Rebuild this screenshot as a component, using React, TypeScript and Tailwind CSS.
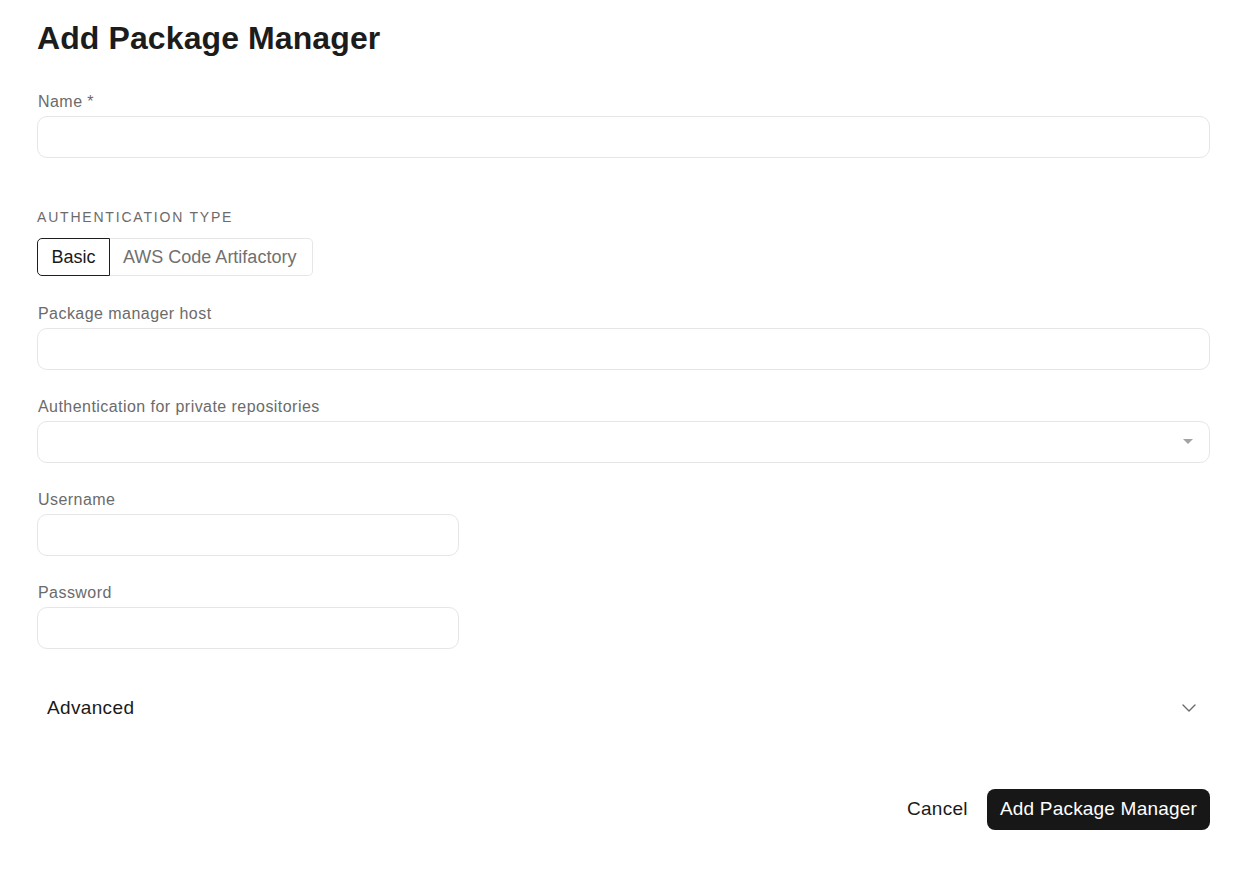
import React from 'react';

const font = { fontFamily: '"Liberation Sans", Arial, sans-serif' };

const Field: React.FC<{ label: string; half?: boolean; select?: boolean }> = ({ label, half, select }) => (
    <div>
        <label className="block h-5 pl-px text-[16px] leading-5 tracking-[0.45px] text-[#6b6b6b]">{label}</label>
        <div
            className={`relative mt-1 h-[42px] rounded-[10px] border border-[#e6e6e6] bg-white ${half ? 'w-[422px]' : 'w-full'}`}
        >
            {select && (
                <svg className="absolute right-[16px] top-[17px]" width="10" height="6" viewBox="0 0 10 6">
                    <path d="M0 0h10L5 5z" fill="#a3a3a3" />
                </svg>
            )}
        </div>
    </div>
);

export default function App() {
    return (
        <div className="min-h-screen bg-white text-[#1a1a1a]" style={font}>
            <div className="px-[37px] pr-[31px] pt-[18px] pb-10">
                <h1 className="text-[32px] leading-10 font-bold tracking-[0.1px] text-[#1c1c1c]">Add Package Manager</h1>

                <div className="mt-[34px]">
                    <Field label="Name *" />
                </div>

                <p className="mt-[49px] h-5 text-[14px] leading-5 tracking-[1.8px] text-[#6b6b6b]">AUTHENTICATION TYPE</p>
                <div className="mt-[11px] flex h-[38px] w-[276px]">
                    <button className="h-full w-[73px] rounded-l-[5px] border border-[#1f1f1f] text-[18px] text-[#1a1a1a]">
                        Basic
                    </button>
                    <button className="h-full flex-1 rounded-r-[5px] border border-l-0 border-[#e6e6e6] pl-[13px] text-left text-[18px] text-[#707070]">
                        AWS Code Artifactory
                    </button>
                </div>

                <div className="mt-[28px] space-y-[27px]">
                    <Field label="Package manager host" />
                    <Field label="Authentication for private repositories" select />
                    <Field label="Username" half />
                    <Field label="Password" half />
                </div>

                <div className="mt-[47px] flex h-6 items-center justify-between pl-[10px] pr-[14px]">
                    <span className="text-[19px] leading-6 tracking-[0.35px] text-[#1a1a1a]">Advanced</span>
                    <svg width="14" height="8" viewBox="0 0 14 8" fill="none">
                        <path d="M1 1l6 6 6-6" stroke="#6b6b6b" strokeWidth="1.4" strokeLinecap="round" strokeLinejoin="round" />
                    </svg>
                </div>

                <div className="mt-[69px] flex items-center justify-end gap-[19px]">
                    <button className="text-[19px] tracking-[0.3px] text-[#1a1a1a]">Cancel</button>
                    <button className="h-[41px] rounded-[8px] bg-[#171717] px-[13px] text-[19px] tracking-[0.2px] text-white">
                        Add Package Manager
                    </button>
                </div>
            </div>
        </div>
    );
}
